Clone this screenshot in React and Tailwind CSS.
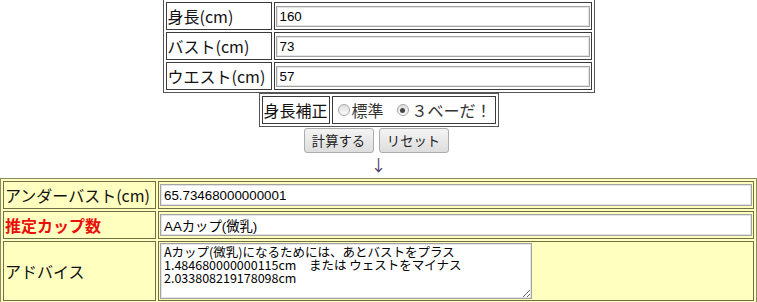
import React from 'react';

const topRows = [
  { label: '身長(cm)', value: '160' },
  { label: 'バスト(cm)', value: '73' },
  { label: 'ウエスト(cm)', value: '57' },
];

const advice =
  'Aカップ(微乳)になるためには、あとバストをプラス\n1.484680000000115cm　または ウェストをマイナス\n2.033808219178098cm';

function Radio({ checked }) {
  return (
    <span className="inline-flex w-[12px] h-[12px] items-center justify-center rounded-full border border-[#a6a6a6] bg-gradient-to-b from-[#dedede] to-[#fbfbfb]">
      {checked && <span className="w-[5px] h-[5px] rounded-full bg-[#444]" />}
    </span>
  );
}

export default function App() {
  return (
    <div className="w-[757px] h-[302px] overflow-hidden bg-white font-['Noto_Sans_CJK_JP',sans-serif] text-[16px] text-[#111]">
      {/* input table */}
      <table className="-mt-px mx-auto w-[432px] table-fixed border-separate border-spacing-[2px] border border-[#555]">
        <tbody>
          {topRows.map((row) => (
            <tr key={row.label}>
              <td className="w-[106px] h-[28px] border border-[#3a3a3a] p-px leading-[23px] whitespace-nowrap">
                {row.label}
              </td>
              <td className="h-[28px] border border-[#3a3a3a] p-px">
                <input
                  defaultValue={row.value}
                  className="block w-full h-[21px] border border-[#a3a3a3] shadow-[inset_0_0_0_1px_#e4e4e4] bg-white px-[3px] font-['Liberation_Sans',Arial,sans-serif] text-[13.33px] text-black outline-none"
                />
              </td>
            </tr>
          ))}
        </tbody>
      </table>

      {/* height correction */}
      <table className="mx-auto w-[240px] table-fixed border-separate border-spacing-[2px] border border-[#555]">
        <tbody>
          <tr>
            <td className="w-[68px] h-[28px] border border-[#3a3a3a] p-px leading-[23px] whitespace-nowrap">身長補正</td>
            <td className="h-[28px] border border-[#3a3a3a] p-px leading-[23px] whitespace-nowrap">
              <span className="flex items-center">
                <span className="ml-[4px] flex"><Radio /></span>
                <span className="ml-[2px] text-[#333]">標準</span>
                <span className="ml-[13px] flex"><Radio checked /></span>
                <span className="ml-[3px] text-[#333]">３ベーだ！</span>
              </span>
            </td>
          </tr>
        </tbody>
      </table>

      {/* buttons */}
      <div className="flex justify-center gap-[5px] pr-[5px] mt-px">
        <button className="w-[70px] h-[25px] rounded-[3px] border border-[#acacac] bg-gradient-to-b from-[#f4f4f4] to-[#dddddd] text-[13.33px] text-[#222]">
          計算する
        </button>
        <button className="w-[70px] h-[25px] rounded-[3px] border border-[#acacac] bg-gradient-to-b from-[#f4f4f4] to-[#dddddd] text-[13.33px] text-[#222]">
          リセット
        </button>
      </div>
      <div className="h-[25px] text-center leading-[22px] text-[16px] text-[#4a3a6e]">↓</div>

      {/* result table */}
      <table className="w-full table-fixed border-separate border-spacing-[2px] border border-[#8c8c62] bg-[#ffffc0]">
        <tbody>
          <tr>
            <td className="w-[153px] h-[28px] border border-[#6f6f48] p-px leading-[23px] whitespace-nowrap">アンダーバスト(cm)</td>
            <td className="h-[28px] border border-[#6f6f48] p-px">
              <input
                defaultValue="65.73468000000001"
                className="block w-full h-[22px] border border-[#a3a3a3] shadow-[inset_0_0_0_1px_#e4e4e4] bg-white px-[3px] font-['Liberation_Sans',Arial,sans-serif] text-[13.33px] text-black outline-none"
              />
            </td>
          </tr>
          <tr>
            <td className="h-[28px] border border-[#6f6f48] p-px leading-[23px] whitespace-nowrap font-bold text-[#e8100c]">推定カップ数</td>
            <td className="h-[28px] border border-[#6f6f48] p-px">
              <input
                defaultValue="AAカップ(微乳)"
                className="block w-full h-[22px] border border-[#a3a3a3] shadow-[inset_0_0_0_1px_#e4e4e4] bg-white px-[3px] font-['Liberation_Sans','Noto_Sans_CJK_JP',sans-serif] text-[13.33px] text-black outline-none"
              />
            </td>
          </tr>
          <tr>
            <td className="h-[60px] border border-[#6f6f48] p-px whitespace-nowrap">アドバイス</td>
            <td className="h-[60px] border border-[#6f6f48] p-px align-top">
              <textarea
                defaultValue={advice}
                className="block w-[372px] h-[56px] border border-[#a3a3a3] shadow-[inset_0_0_0_1px_#e4e4e4] bg-white px-[3px] pt-px font-['Noto_Sans_CJK_JP',monospace] text-[12.5px] leading-[13px] text-black outline-none"
              />
            </td>
          </tr>
        </tbody>
      </table>
    </div>
  );
}
